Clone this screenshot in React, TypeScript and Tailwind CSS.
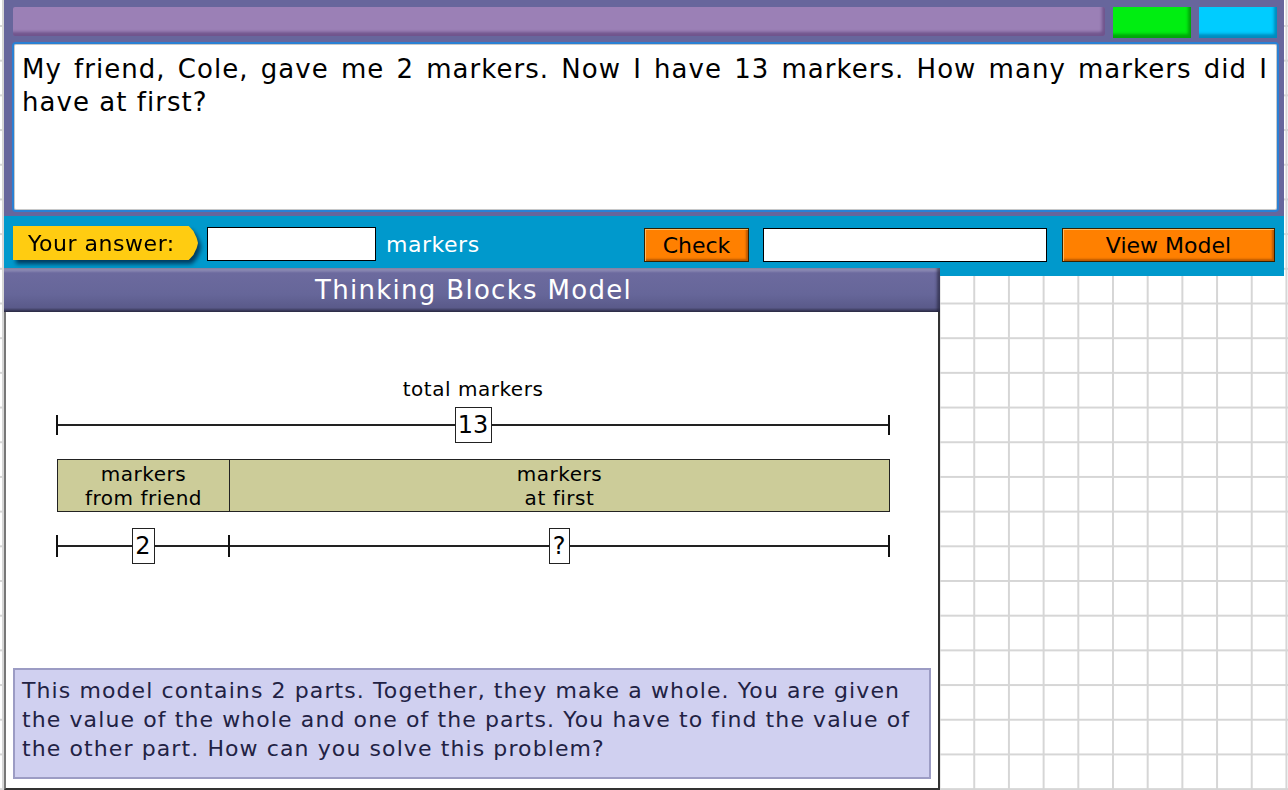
import React from "react";

const font = { fontFamily: '"DejaVu Sans", Verdana, "Liberation Sans", sans-serif' };

function Tick({ h }: { h: string }) {
  return <div className={`w-[2px] ${h} bg-[#111]`} />;
}

function Segment({ width, label, boxW }: { width: string; label: string; boxW: string }) {
  return (
    <div className={`${width} flex items-center`}>
      <div className="flex-1 h-[2px] bg-[#222]" />
      <div
        className={`${boxW} h-[36px] border border-[#222] bg-white flex items-center justify-center text-[24px] leading-none text-black tracking-normal`}
      >
        {label}
      </div>
      <div className="flex-1 h-[2px] bg-[#222]" />
    </div>
  );
}

export default function App() {
  return (
    <div
      style={font}
      className="relative w-[1288px] h-[790px] overflow-hidden tracking-[0.033em] bg-white bg-[linear-gradient(to_right,#d6d6d6_2px,transparent_2px),linear-gradient(to_bottom,#d6d6d6_2px,transparent_2px)] bg-[size:34.7px_34.7px] bg-[position:2px_25px]"
    >
      {/* Top question panel */}
      <div className="ml-[4px] w-[1280px]">
        <div className="bg-[#67669c] px-[8px] pt-[7px] pb-[4px]">
          <div className="flex gap-[8px] ml-[1px] mr-[-1px] h-[31px]">
            <div className="flex-1 h-[29px] rounded-[2px] bg-[#9b80b6] shadow-[inset_-3px_-4px_3px_rgba(60,30,90,0.45)]" />
            <div className="w-[78px] h-[31px] bg-[#00ee11] shadow-[inset_-3px_-4px_3px_rgba(0,80,0,0.45)]" />
            <div className="w-[78px] h-[31px] bg-[#00ccff] shadow-[inset_-3px_-4px_3px_rgba(0,60,110,0.45)]" />
          </div>
          <div className="mt-[4px] mr-[-3px] h-[170px] rounded-[4px] border-2 border-[#2a80d4] bg-white shadow-[inset_0_0_0_1px_#c8c8c8] pl-[8px] pr-[9px] pt-[9px]">
            <p className="text-[26px] leading-[33px] text-black text-justify tracking-[0.04em]">
              My friend, Cole, gave me 2 markers. Now I have 13 markers. How many markers did I have at first?
            </p>
          </div>
        </div>

        {/* Answer band */}
        <div className="bg-[#0099cc] h-[60px] pl-[9px] pt-[10px] flex items-start">
          <div className="drop-shadow-[3px_4px_2px_rgba(0,30,60,0.75)]">
            <div className="w-[185px] h-[34px] bg-[#ffcc11] [clip-path:polygon(0_0,95%_0,97.5%_15%,99.3%_35%,100%_50%,99.3%_65%,97.5%_85%,95%_100%,0_100%)] flex items-center pl-[15px] text-[22px] text-black">
              Your answer:
            </div>
          </div>
          <div className="ml-[9px] mt-[1px] w-[169px] h-[34px] border border-black bg-white" />
          <div className="ml-[10px] w-[258px] h-[36px] flex items-center text-[22px] text-white">markers</div>
          <div className="mt-[2px] w-[105px] h-[34px] border border-[#332200] bg-[#ff8000] shadow-[inset_1px_1px_0_rgba(255,200,120,0.8),inset_-2px_-2px_2px_rgba(120,50,0,0.5)] flex items-center justify-center text-[22px] text-black tracking-normal">
            Check
          </div>
          <div className="ml-[14px] mt-[2px] w-[284px] h-[34px] border border-black bg-white" />
          <div className="ml-[15px] mt-[2px] w-[213px] h-[34px] border border-[#332200] bg-[#ff8000] shadow-[inset_1px_1px_0_rgba(255,200,120,0.8),inset_-2px_-2px_2px_rgba(120,50,0,0.5)] flex items-center justify-center text-[22px] text-black tracking-normal">
            View Model
          </div>
        </div>
      </div>

      {/* Thinking Blocks Model window */}
      <div className="absolute left-[4px] top-[268px] w-[936px] h-[522px] flex flex-col">
        <div className="h-[44px] pl-[3px] bg-[linear-gradient(to_bottom,#a6a4c6_0px,#6c6a9e_5px,#666699_60%,#5a5a8a_90%,#2e2e48_100%)] shadow-[inset_-3px_0_3px_rgba(30,30,50,0.6)] flex items-center justify-center text-[26px] text-white tracking-[0.05em]">
          Thinking Blocks Model
        </div>
        <div className="flex-1 bg-white border-x-2 border-b-2 border-[#333] border-l-[#777] flex flex-col">
          {/* Diagram */}
          <div className="ml-[50px] w-[834px] flex flex-col">
            <div className="mt-[65px] h-[24px] leading-[24px] text-[20px] text-black text-center">total markers</div>
            <div className="mt-[5px] h-[38px] flex items-center">
              <Tick h="h-[20px]" />
              <Segment width="w-[830px]" label="13" boxW="w-[37px]" />
              <Tick h="h-[20px]" />
            </div>
            <div className="mt-[15px] ml-[1px] w-[833px] h-[53px] border border-[#222] bg-[#cccc99] flex text-[20px] leading-[24px] text-black">
              <div className="w-[172px] border-r border-[#222] flex items-center justify-center text-center">
                markers
                <br />
                from friend
              </div>
              <div className="flex-1 flex items-center justify-center text-center">
                markers
                <br />
                at first
              </div>
            </div>
            <div className="mt-[16px] h-[36px] flex items-center">
              <Tick h="h-[22px]" />
              <Segment width="w-[170px]" label="2" boxW="w-[23px]" />
              <Tick h="h-[22px]" />
              <Segment width="w-[658px]" label="?" boxW="w-[21px]" />
              <Tick h="h-[22px]" />
            </div>
          </div>

          {/* Info box */}
          <div className="mt-[104px] ml-[7px] w-[918px] h-[111px] border-2 border-[#9c9cc4] bg-[#d0d0f0] px-[7px] pt-[6px] text-[22px] leading-[29px] text-[#222244] tracking-[0.05em]">
            This model contains 2 parts. Together, they make a whole. You are given the value of the whole and one of the parts. You have to find the value of the other part. How can you solve this problem?
          </div>
        </div>
      </div>
    </div>
  );
}
